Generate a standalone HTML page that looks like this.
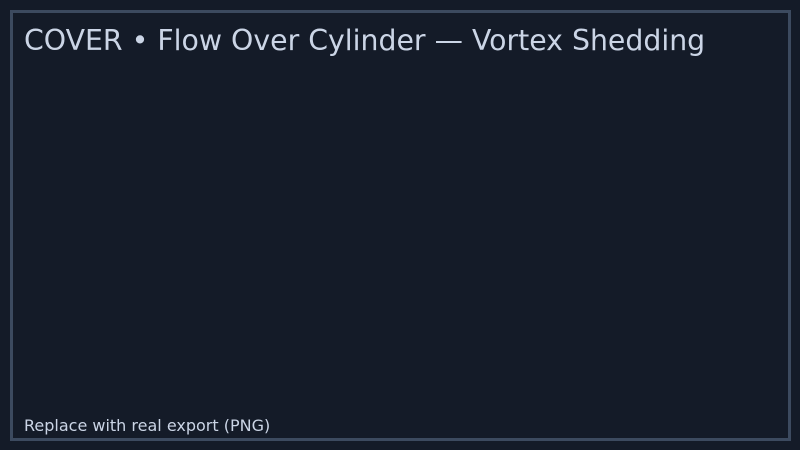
<!DOCTYPE html><html><head><style>
body{margin:0;width:800px;height:450px;background:#141b28;overflow:hidden;font-family:"DejaVu Sans","Liberation Sans",sans-serif;}
.f{position:absolute;left:10px;top:10px;width:775px;height:425px;border:3px solid #3c4a5f;}
.t{position:absolute;left:24px;top:24px;font-size:28.35px;color:#cbd5e6;white-space:nowrap;line-height:34px}
.b{position:absolute;left:24px;top:416px;font-size:16px;color:#cbd5e6;white-space:nowrap;line-height:20px}
</style></head><body><div class="f"></div>
<div class="t">COVER • Flow Over Cylinder — Vortex Shedding</div>
<div class="b">Replace with real export (PNG)</div></body></html>
